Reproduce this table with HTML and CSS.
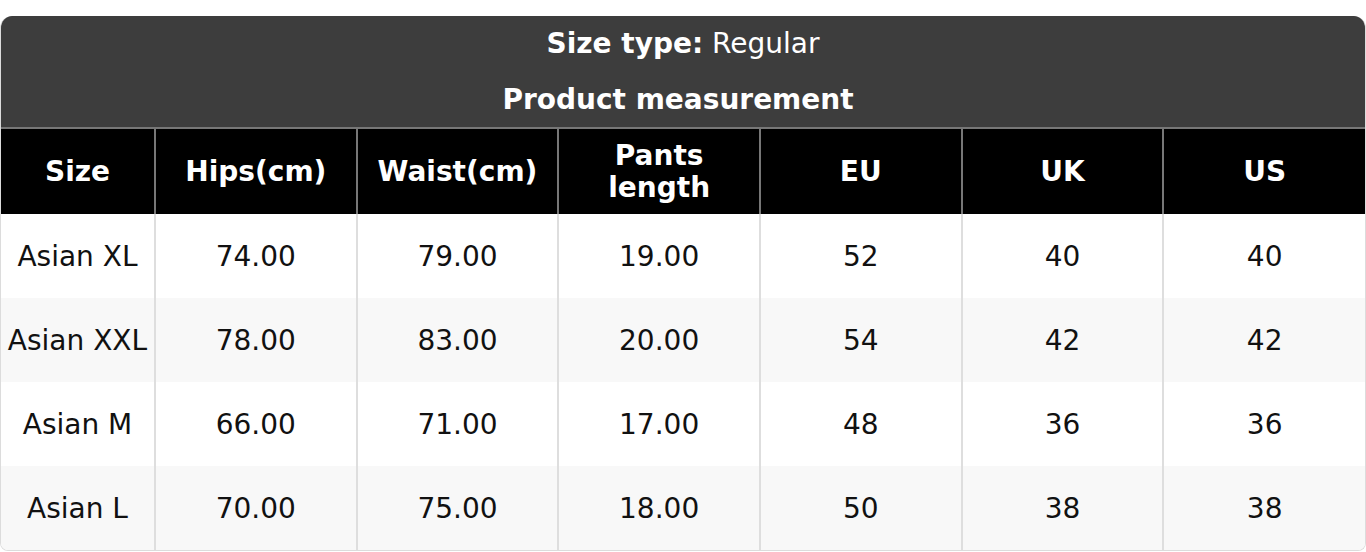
FILE: index.html
```html
<!DOCTYPE html>
<html>
<head>
<meta charset="utf-8">
<link rel="stylesheet" href="styles.css">
</head>
<body>
<div class="wrap">
  <div class="card">
    <div class="title">
      <div class="title-line"><b>Size type:</b> Regular</div>
      <div class="title-line title-sub"><b>Product measurement</b></div>
    </div>
    <table class="sizes">
      <colgroup>
        <col class="c-first"><col><col><col><col><col><col>
      </colgroup>
      <thead>
        <tr>
          <th>Size</th><th>Hips(cm)</th><th>Waist(cm)</th><th>Pants<br>length</th><th>EU</th><th>UK</th><th>US</th>
        </tr>
      </thead>
      <tbody>
        <tr><td>Asian XL</td><td>74.00</td><td>79.00</td><td>19.00</td><td>52</td><td>40</td><td>40</td></tr>
        <tr><td>Asian XXL</td><td>78.00</td><td>83.00</td><td>20.00</td><td>54</td><td>42</td><td>42</td></tr>
        <tr><td>Asian M</td><td>66.00</td><td>71.00</td><td>17.00</td><td>48</td><td>36</td><td>36</td></tr>
        <tr><td>Asian L</td><td>70.00</td><td>75.00</td><td>18.00</td><td>50</td><td>38</td><td>38</td></tr>
      </tbody>
    </table>
  </div>
</div>
</body>
</html>
```
FILE: styles.css
```css
html, body {
  margin: 0;
  padding: 0;
  background: #fff;
}
body {
  font-family: "DejaVu Sans", sans-serif;
}
.wrap {
  padding-top: 16px;
}
.card {
  border-radius: 12px 12px 8px 8px;
  overflow: hidden;
  border: 1px solid #dcdcdc;
  border-top: none;
  box-sizing: border-box;
}
.title {
  background: #3d3d3d;
  color: #fff;
  text-align: center;
  font-size: 28px;
  border-bottom: 2px solid #777;
}
.title-line {
  height: 56px;
  line-height: 56px;
}
.title-sub {
  height: 55px;
  line-height: 55px;
  padding-right: 10px;
}
.sizes {
  width: 100%;
  border-collapse: collapse;
  table-layout: fixed;
}
.c-first {
  width: 154px;
}
.sizes th {
  background: #000;
  color: #fff;
  font-weight: bold;
  font-size: 28px;
  line-height: 32px;
  height: 85px;
  padding: 0;
  border-left: 2px solid #777;
  text-align: center;
}
.sizes th:first-child, .sizes td:first-child {
  border-left: none;
}
.sizes td {
  height: 84px;
  padding: 0;
  text-align: center;
  font-size: 28px;
  color: #111;
  border-left: 2px solid #dedede;
  white-space: nowrap;
}
.sizes tbody tr:nth-child(even) td {
  background: #f8f8f8;
}
```
